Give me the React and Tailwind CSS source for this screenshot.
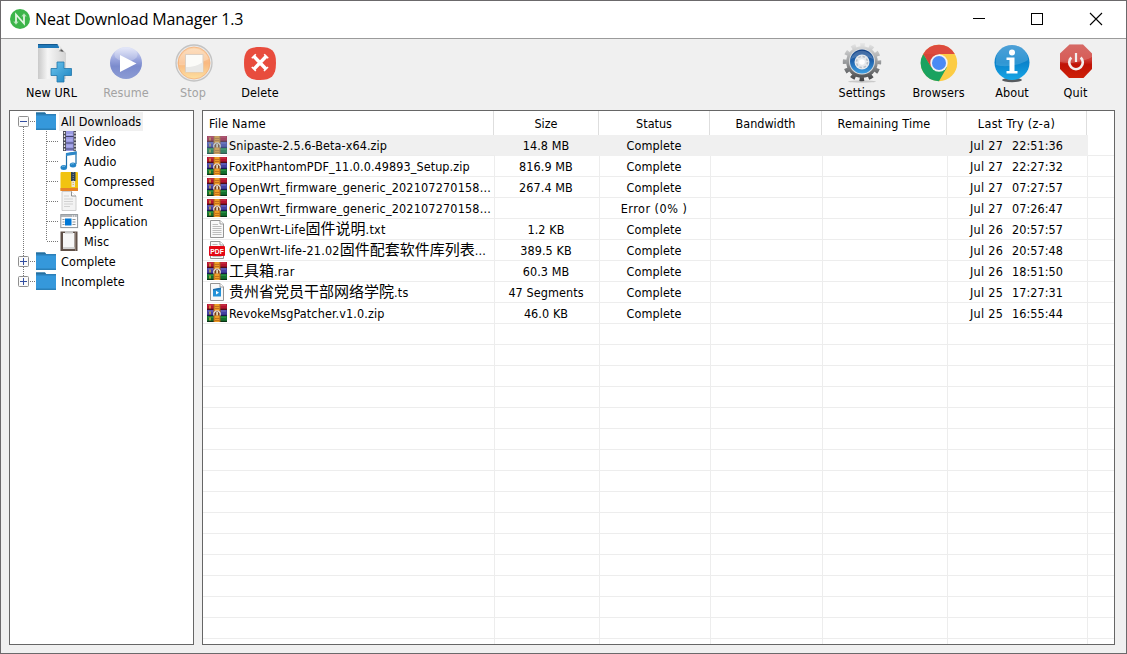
import React from 'react';

const UI_FONT = "font-['DejaVu_Sans_Condensed','DejaVu_Sans',Tahoma,'Noto_Sans_CJK_SC',sans-serif]";

/* ---------- toolbar icons (40x40) ---------- */

const NewUrlIcon = () => (
  <svg width="40" height="40" viewBox="0 0 40 40">
    <defs>
      <linearGradient id="nu1" x1="0" x2="1"><stop offset="0" stopColor="#c9c9c9" /><stop offset=".35" stopColor="#f6f6f6" /><stop offset="1" stopColor="#d4d4d4" /></linearGradient>
      <linearGradient id="nu2" x1="0" x2="1" y2="1"><stop offset="0" stopColor="#6cc4ee" /><stop offset="1" stopColor="#1a83c0" /></linearGradient>
      <linearGradient id="nu3" x1="0" x2="1" y2="1"><stop offset="0.3" stopColor="#fff" /><stop offset="0.55" stopColor="#333" /><stop offset="1" stopColor="#bbb" /></linearGradient>
    </defs>
    <path d="M6 1h20l8 9v26H6z" fill="url(#nu1)" />
    <path d="M6 1h19l3 4H6z" fill="#1f78b8" />
    <path d="M6 1h19l1 1H6z" fill="#14598f" />
    <path d="M26 2c2 2 1 5 .5 6.500c3-.5 6 0 7.500 3z" fill="url(#nu3)" />
    <path d="M25 19h7v6.500h7.500v7h-7.500v6.500h-7v-6.500h-6v-7h6z" fill="url(#nu2)" stroke="#2176ab" strokeWidth=".8" />
  </svg>
);

const ResumeIcon = () => (
  <svg width="40" height="40" viewBox="0 0 40 40">
    <defs>
      <linearGradient id="re1" x2="0" y2="1"><stop offset="0" stopColor="#dfe3f8" /><stop offset=".4" stopColor="#97a3dc" /><stop offset=".6" stopColor="#7b8bcd" /><stop offset="1" stopColor="#8c9cd4" /></linearGradient>
    </defs>
    <circle cx="20" cy="20" r="16" fill="url(#re1)" />
    <ellipse cx="20" cy="11.500" rx="11.500" ry="7" fill="#fff" opacity=".25" />
    <path d="M14 12l16.500 8.500L14 29z" fill="#fff" />
  </svg>
);

const StopIcon = () => (
  <svg width="40" height="40" viewBox="0 0 40 40">
    <defs>
      <linearGradient id="st1" x2="0" y2="1"><stop offset="0" stopColor="#fbd5ac" /><stop offset=".5" stopColor="#f9b880" /><stop offset="1" stopColor="#fde0a0" /></linearGradient>
    </defs>
    <circle cx="20" cy="20" r="18" fill="#e9e9e9" stroke="#c3c3c3" strokeWidth="1.300" />
    <circle cx="20" cy="20" r="16" fill="url(#st1)" stroke="#f4b07a" strokeWidth=".8" />
    <path d="M5 16a16 16 0 0 1 30 0c-8 4-20 7-30 6z" fill="#fff" opacity=".25" />
    <rect x="11.500" y="11.500" width="17.500" height="17.500" fill="#fbfbf8" stroke="#dccfc2" strokeWidth="1" />
    <path d="M12 24c7 0 13-2 17-5v10H12z" fill="#e8e8e6" />
  </svg>
);

const DeleteIcon = () => (
  <svg width="40" height="40" viewBox="0 0 40 40">
    <path d="M20 4c12 0 16 4 16 16c0 13-5 17-16 17S4 33 4 20C4 8 8 4 20 4z" fill="#e84c3d" />
    <path d="M13.500 13l12.500 13M26.500 13l-12.500 13" stroke="#fff" strokeWidth="3.400" />
    <path d="M11.800 15.300l4-4M24 28l4-4M24.200 11.300l4 4M11.800 24l4 4" stroke="#fff" strokeWidth="1.600" />
  </svg>
);

const SettingsIcon = () => (
  <svg width="40" height="40" viewBox="0 0 40 40">
    <defs>
      <linearGradient id="se1" gradientUnits="userSpaceOnUse" x1="20" x2="20" y1="0" y2="39"><stop offset="0" stopColor="#e9e9e9" /><stop offset=".5" stopColor="#97999b" /><stop offset="1" stopColor="#3c3d3f" /></linearGradient>
      <linearGradient id="se2" x2="0" y2="1"><stop offset="0" stopColor="#123f84" /><stop offset=".5" stopColor="#2064ae" /><stop offset="1" stopColor="#3d9fe3" /></linearGradient>
    </defs>
    <ellipse cx="20" cy="38.500" rx="14" ry="1.200" fill="#c9c9c9" />
    <circle cx="20" cy="19" r="15.800" fill="url(#se1)" />
    <circle cx="20" cy="19" r="17.200" fill="none" stroke="url(#se1)" strokeWidth="4" strokeDasharray="4.600 4.406" strokeDashoffset="2.300" />
    <circle cx="20" cy="18.500" r="13" fill="#d9dcdf" />
    <circle cx="20" cy="18.500" r="12" fill="url(#se2)" />
    <path d="M9 16a11.500 11.500 0 0 1 22 0c-6-3-16-3-22 0z" fill="#fff" opacity=".2" />
    <circle cx="20" cy="19" r="7.500" fill="#e6e9ed" />
    <circle cx="20" cy="19" r="5.500" fill="none" stroke="#b9bfc7" strokeWidth="1.500" strokeDasharray="2.500 1.800" />
    <circle cx="20" cy="19" r="2.800" fill="#fff" />
  </svg>
);

const ChromeIcon = () => (
  <svg width="40" height="40" viewBox="0 0 40 40">
    <circle cx="20" cy="20" r="18.200" fill="#fccc44" />
    <path d="M20 20L4.200 10.900A18.200 18.200 0 0 1 35.800 11H20z" fill="#dd4b3e" />
    <path d="M4.200 10.900A18.200 18.200 0 0 0 20 38.200L27.800 24.500 20 20l-7.800 4.500z" fill="#1aa260" />
    <path d="M4.200 10.900L12.200 24.500L20 11z" fill="#d74437" />
    <path d="M4.200 10.900L12.200 24.500l2 2L9 23z" fill="#1aa260" />
    <circle cx="20" cy="20" r="8.700" fill="#f3f3f3" />
    <circle cx="20" cy="20" r="7" fill="#4a8af4" />
  </svg>
);

const AboutIcon = () => (
  <svg width="40" height="40" viewBox="0 0 40 40">
    <defs>
      <linearGradient id="ab1" x2="0" y2="1"><stop offset="0" stopColor="#2d8fd0" /><stop offset=".5" stopColor="#0a83cb" /><stop offset="1" stopColor="#17a6e6" /></linearGradient>
    </defs>
    <ellipse cx="20" cy="37" rx="10" ry="2.200" fill="#3c4145" opacity=".85" />
    <circle cx="20" cy="19.500" r="17.500" fill="url(#ab1)" />
    <path d="M4 17a16 16 0 0 1 32 0c-8 5-22 8-32 5z" fill="#fff" opacity=".16" />
    <circle cx="20" cy="9.500" r="3" fill="#fff" />
    <path d="M14.500 14.500h8v13.500h3v2.500h-11v-2.500h3V17h-3z" fill="#fff" />
  </svg>
);

const QuitIcon = () => (
  <svg width="40" height="40" viewBox="0 0 40 40">
    <defs>
      <linearGradient id="qu1" x2="0" y2="1"><stop offset="0" stopColor="#ce4a45" /><stop offset=".45" stopColor="#cf3a34" /><stop offset=".6" stopColor="#c01306" /><stop offset="1" stopColor="#ce2008" /></linearGradient>
    </defs>
    <path d="M13.500 1.500h13.500l9 9v15.500l-8.500 9h-14.500L4 26V10.500z" fill="url(#qu1)" />
    <path d="M4 19V10.500l9.500-9h13.500l9 9V14c-8 4-20 8-32 5z" fill="#fff" opacity=".18" />
    <path d="M15.300 14.500a6.800 6.800 0 1 0 9.400 0" fill="none" stroke="#f3eeee" strokeWidth="2.600" />
    <path d="M20 10v9" stroke="#f3eeee" strokeWidth="2.200" />
  </svg>
);

/* ---------- small icons ---------- */

const FolderIcon = () => (
  <svg width="20" height="20" viewBox="0 0 20 20" className="shrink-0">
    <path d="M0 1.500h9l1 1.500h10V9H0z" fill="#2c7fb8" />
    <path d="M0 1.500h9l1 1.500H0z" fill="#26709f" />
    <rect y="4.500" width="20" height="14.500" fill="#3598db" />
    <rect y="17.500" width="20" height="1.500" fill="#2a80b9" />
  </svg>
);

const VideoIcon = () => (
  <svg width="20" height="20" viewBox="0 0 20 20">
    <rect x="3" width="13" height="20" fill="#4a4b55" />
    <rect x="6" width="7.500" height="20" fill="#9a9ae2" />
    <path d="M6 5.500h7.500M6 12h7.500M6 18h7.500" stroke="#41416c" />
    <path d="M6.500 3.500h6M6.500 9h6M6.500 15h6" stroke="#b9b9f0" />
    <path d="M4.500 1v19M15 1v19" stroke="#eee" strokeWidth="1.300" strokeDasharray="1.800 1.500" />
  </svg>
);

const AudioIcon = () => (
  <svg width="20" height="20" viewBox="0 0 20 20">
    <path d="M6.500 16V3L16 1v12" fill="none" stroke="#1d6da8" strokeWidth="1.200" />
    <path d="M6 2L16.500 .5v3L6 5z" fill="#2d88c8" />
    <ellipse cx="3.800" cy="16.500" rx="3.300" ry="2.500" fill="#2283c6" />
    <ellipse cx="13" cy="14" rx="3.300" ry="2.500" fill="#2283c6" />
    <path d="M2 16c1-1 2-1 3-.5M11 13.500c1-1 2-1 3-.5" stroke="#75bde8" fill="none" />
  </svg>
);

const CompressedIcon = () => (
  <svg width="20" height="20" viewBox="0 0 20 20">
    <rect x=".5" y="1" width="17.500" height="19" rx="1" fill="#f1c311" />
    <rect x=".5" y="17" width="17.500" height="3" fill="#e6822a" />
    <rect x="11" y="1" width="4.500" height="9" fill="#2d4154" />
    <path d="M13.200 1v9" stroke="#8796a3" strokeDasharray="1 1" />
    <rect x="11.500" y="10" width="3.500" height="6" fill="#e9e6da" />
    <path d="M13.200 11v4" stroke="#e0a92c" strokeDasharray="1 1" />
  </svg>
);

const DocumentIcon = () => (
  <svg width="20" height="20" viewBox="0 0 20 20">
    <path d="M2 .5h9.500l4.500 4.500v14.500H2z" fill="#f3f3f3" stroke="#c4c4c4" strokeWidth=".8" />
    <path d="M11.500.5v4.500h4.500" fill="#fff" stroke="#777" strokeWidth=".8" />
    <path d="M4 5h5M4 8h9M4 10.500h9M4 13h9M4 15.500h6" stroke="#cecece" strokeWidth=".9" />
  </svg>
);

const ApplicationIcon = () => (
  <svg width="20" height="20" viewBox="0 0 20 20">
    <rect x=".8" y="3.600" width="16.800" height="13" fill="#fcfcfc" stroke="#8e9499" />
    <path d="M1 5h16.500" stroke="#9ca1a5" strokeWidth="1.500" />
    <path d="M12 5h4.500" stroke="#fff" strokeDasharray="1 1" />
    <rect x="5" y="7.500" width="6.500" height="7" fill="#0078d7" />
    <path d="M2.500 8.500h2M2.500 11h2M2.500 13.500h2M12.500 8.500h3M12.500 11h3M12.500 13.500h3" stroke="#8f9598" />
  </svg>
);

const MiscIcon = () => (
  <svg width="20" height="20" viewBox="0 0 20 20">
    <rect x=".5" y=".5" width="17" height="19.500" fill="#5f5048" />
    <path d="M15.500 1v19" stroke="#8b7b70" />
    <rect x="3" y="2" width="11.500" height="16" fill="#f7f7f7" />
    <path d="M3 16h11.500v2H3z" fill="#d3d3d3" />
    <path d="M5 0h8v2.500H5z" fill="#c6c6c6" />
  </svg>
);

const RarIcon = ({ dim }) => (
  <svg width="20" height="18" viewBox="0 0 20 18" className="shrink-0">
    <rect width="20" height="6" fill="#b3142e" />
    <path d="M1 1h18" stroke="#d43c50" />
    <path d="M0 5.300h20" stroke="#4c0b18" strokeWidth="1.300" />
    <rect y="6" width="20" height="6" fill="#4440a0" />
    <path d="M1 7h18" stroke="#7772c6" />
    <path d="M0 11.400h20" stroke="#191950" strokeWidth="1.300" />
    <rect y="12" width="20" height="6" fill="#14702e" />
    <path d="M1 13.200h18" stroke="#2f9a4b" />
    <path d="M0 17.400h20" stroke="#0a3314" strokeWidth="1.200" />
    <path d="M3 1.500v3M3 7.500v3M3 13.500v3" stroke="#e3c63b" strokeWidth="1.200" />
    <rect x="6.500" width="7" height="18" fill="#a65b1d" />
    <rect x="7.500" width="5" height="18" fill="#ee9d26" />
    <path d="M7.500 2.500h5M8 4.500h4" stroke="#b8651a" strokeWidth=".8" />
    <path d="M6.800 11.500V9l1.700-2h3l1.700 2v2.500" fill="#7d3f17" stroke="#e0e0e6" strokeWidth="1.200" />
    <rect x="9.300" y="8" width="1.600" height="3.500" fill="#f4e9c4" />
    <path d="M8 14.500h4.500M8 16.500h4.500" stroke="#b76515" strokeWidth=".8" />
    {dim && <rect width="20" height="18" fill="#7fa8cc" opacity=".35" />}
  </svg>
);

const Page = () => (
  <g>
    <path d="M3.500.5h9.500l3.500 3.500v13.500h-13z" fill="#f8f8f8" stroke="#949494" />
    <path d="M13 .5v3.500h3.500" fill="#fff" stroke="#949494" strokeWidth=".9" />
  </g>
);

const TxtIcon = () => (
  <svg width="20" height="18" viewBox="0 0 20 18" className="shrink-0">
    <Page />
    <path d="M5.500 4.500h5.500M5.500 6.500h9M5.500 8.500h9M5.500 10.500h9M5.500 12.500h9M5.500 14.500h9" stroke="#b5b5b5" strokeWidth=".9" />
  </svg>
);

const PdfIcon = () => (
  <svg width="20" height="18" viewBox="0 0 20 18" className="shrink-0">
    <Page />
    <path d="M5.500 3.500h5M5.500 15.500h9" stroke="#bbb" />
    <rect x="2" y="5" width="16" height="10" rx="1" fill="#e30613" />
    <text x="10" y="12.500" textAnchor="middle" fill="#fff" fontSize="7" fontWeight="700" fontFamily="Liberation Sans, sans-serif" textLength="13.500" lengthAdjust="spacingAndGlyphs">PDF</text>
  </svg>
);

const TsIcon = () => (
  <svg width="20" height="18" viewBox="0 0 20 18" className="shrink-0">
    <Page />
    <path d="M6 6.500l8-1.500v8.500H6z" fill="#2492d8" />
    <path d="M6 6l8-1.500v2L6 7.500z" fill="#1b6fb0" />
    <path d="M9 7.800l3 1.900-3 1.900z" fill="#fff" />
  </svg>
);

const fileIcons = { rar: RarIcon, txt: TxtIcon, pdf: PdfIcon, ts: TsIcon };

/* ---------- data ---------- */

const leftTools = [
  { label: 'New URL', Icon: NewUrlIcon, width: 'w-[75px]', shift: 'pl-px' },
  { label: 'Resume', Icon: ResumeIcon, width: 'w-[74px]', disabled: true, shift: '' },
  { label: 'Stop', Icon: StopIcon, width: 'w-[60px]', disabled: true, shift: 'pl-px' },
  { label: 'Delete', Icon: DeleteIcon, width: 'w-[74px]', shift: '' },
];

const rightTools = [
  { label: 'Settings', Icon: SettingsIcon, width: 'w-[76px]', shift: 'pr-px' },
  { label: 'Browsers', Icon: ChromeIcon, width: 'w-[77px]', shift: '' },
  { label: 'About', Icon: AboutIcon, width: 'w-[70px]', shift: '' },
  { label: 'Quit', Icon: QuitIcon, width: 'w-[57px]', shift: '' },
];

const categories = [
  { label: 'Video', Icon: VideoIcon },
  { label: 'Audio', Icon: AudioIcon },
  { label: 'Compressed', Icon: CompressedIcon },
  { label: 'Document', Icon: DocumentIcon },
  { label: 'Application', Icon: ApplicationIcon },
  { label: 'Misc', Icon: MiscIcon },
];

const files = [
  { icon: 'rar', name: ['Snipaste-2.5.6-Beta-x64.zip'], track: 'tracking-[0.09px]', size: '14.8 MB', status: 'Complete', date: 'Jul 27  22:51:36', selected: true },
  { icon: 'rar', name: ['FoxitPhantomPDF_11.0.0.49893_Setup.zip'], track: 'tracking-[0.08px]', size: '816.9 MB', status: 'Complete', date: 'Jul 27  22:27:32' },
  { icon: 'rar', name: ['OpenWrt_firmware_generic_202107270158...'], track: 'tracking-[0.175px]', size: '267.4 MB', status: 'Complete', date: 'Jul 27  07:27:57' },
  { icon: 'rar', name: ['OpenWrt_firmware_generic_202107270158...'], track: 'tracking-[0.175px]', size: '', status: 'Error (0% )', date: 'Jul 27  07:26:47' },
  { icon: 'txt', name: ['OpenWrt-Life', '固件说明', '.txt'], track: 'tracking-[0.22px]', size: '1.2 KB', status: 'Complete', date: 'Jul 26  20:57:57' },
  { icon: 'pdf', name: ['OpenWrt-life-21.02', '固件配套软件库列表', '...'], track: 'tracking-[0.2px]', size: '389.5 KB', status: 'Complete', date: 'Jul 26  20:57:48' },
  { icon: 'rar', name: ['', '工具箱', '.rar'], track: 'tracking-[0.2px]', size: '60.3 MB', status: 'Complete', date: 'Jul 26  18:51:50' },
  { icon: 'ts', name: ['', '贵州省党员干部网络学院', '.ts'], track: 'tracking-[0.2px]', size: '47 Segments', status: 'Complete', date: 'Jul 25  17:27:31' },
  { icon: 'rar', name: ['RevokeMsgPatcher.v1.0.zip'], track: 'tracking-[0.12px]', size: '46.0 KB', status: 'Complete', date: 'Jul 25  16:55:44' },
];

const emptyRows = Array.from({ length: 16 }, (_, i) => i);

/* ---------- pieces ---------- */

const Tool = ({ label, Icon, width, disabled, shift }) => (
  <div className={`flex flex-col items-center ${width}`}>
    <div className={`h-10 ${shift}`}><Icon /></div>
    <span className={`mt-0.5 whitespace-nowrap leading-4 tracking-[0.1px] ${disabled ? 'text-[#a3a3a3]' : 'text-black'}`}>{label}</span>
  </div>
);

const Expander = ({ open }) => (
  <svg width="26" height="20" viewBox="0 0 26 20" className="shrink-0">
    <path d="M20 10.500h6" stroke="#777" strokeDasharray="1 1" />
    <rect x="8.500" y="5.500" width="10" height="10" rx="1" fill="#fafafa" stroke="#8f8f8f" />
    <path d={open ? 'M10 10.500h7' : 'M10 10.500h7M13.500 7v7'} stroke="#334ea0" />
  </svg>
);

const RootNode = ({ label, open, selected, first, last }) => (
  <div className="flex h-5 items-center">
    <div className="relative h-5 w-[26px] shrink-0">
      <svg width="26" height="20" viewBox="0 0 26 20" className="absolute inset-0">
        <path d={first ? 'M13.500 16v4' : last ? 'M13.500 0v6' : 'M13.500 0v20'} stroke="#777" strokeDasharray="1 1" />
      </svg>
      <div className="absolute inset-0"><Expander open={open} /></div>
    </div>
    <FolderIcon />
    <span className={`ml-[3px] h-[19px] px-0.5 leading-5 tracking-[0.08px] ${selected ? 'bg-[#f0f0f0]' : ''}`}>{label}</span>
  </div>
);

const ChildNode = ({ label, Icon, last }) => (
  <div className="flex h-5 items-center">
    <svg width="50" height="20" viewBox="0 0 50 20" className="shrink-0">
      <path d="M13.500 0v20" stroke="#777" strokeDasharray="1 1" />
      <path d={last ? 'M36.500 0v10' : 'M36.500 0v20'} stroke="#777" strokeDasharray="1 1" />
      <path d="M37 10.500h12" stroke="#777" strokeDasharray="1 1" />
    </svg>
    <Icon />
    <span className="ml-1 pt-0.5 leading-5 tracking-[0.08px]">{label}</span>
  </div>
);

const cell = 'flex items-center justify-center border-r whitespace-pre pt-0.5';

const FileRow = ({ file }) => {
  const f = file || {};
  const line = f.selected ? 'h-[21px] border-[#f0f0f0] bg-[#f0f0f0]' : 'h-5 border-[#ededed]';
  const FileIcon = file ? fileIcons[f.icon] : null;
  return (
    <div className="flex h-[21px] shrink-0 border-b border-[#ededed]">
      <div className={`flex h-5 w-[292px] shrink-0 items-center border-r pl-1 ${f.selected ? 'border-[#f0f0f0]' : 'border-[#ededed]'}`}>
        {file && (
          <>
            <FileIcon dim={f.selected} />
            <span className={`flex flex-1 items-center whitespace-nowrap pl-0.5 pt-0.5 ${f.track} ${f.selected ? 'h-5 bg-[#f0f0f0]' : 'h-5'}`}>
              <span>{f.name[0]}</span>
              {f.name[1] && <span className="-mt-1 font-['Noto_Sans_CJK_SC',sans-serif] text-[15px] font-normal leading-5 tracking-normal">{f.name[1]}</span>}
              {f.name[2] && <span>{f.name[2]}</span>}
            </span>
          </>
        )}
      </div>
      <div className={`${cell} w-[105px] pr-0.5 tracking-[0.08px] ${line}`}>{f.size}</div>
      <div className={`${cell} w-[111px] pr-0.5 ${f.size === '' ? 'tracking-[0.5px]' : 'tracking-[0.08px]'} ${line}`}>{f.status}</div>
      <div className={`${cell} w-[112px] ${line}`} />
      <div className={`${cell} w-[125px] ${line}`} />
      <div className={`${cell} w-[140px] pr-0.5 tracking-[0.08px] ${line}`}>
        {file && (
          <>
            <span className="tracking-[0.3px]">{f.date.slice(0, 8)}</span>
            <span className="pl-px">{f.date.slice(8)}</span>
          </>
        )}
      </div>
    </div>
  );
};

export default function App() {
  return (
    <div className={`flex h-[654px] w-[1127px] flex-col overflow-hidden border border-[#6b696b] bg-[#f0f0f0] text-[12.5px] text-black ${UI_FONT}`}>
      <header className="flex h-[38px] shrink-0 items-center border-b border-[#9b9b9b] bg-white pl-[9px]">
        <svg width="20" height="20" viewBox="0 0 20 20" className="-mt-0.5">
          <circle cx="10" cy="10" r="10" fill="#3cb54a" />
          <path d="M6 14.500V5.500l8 9V5.500" fill="none" stroke="#e2f5e2" strokeWidth="1.800" />
          <path d="M3.800 12.500L6 15l2.200-2.500M11.800 7.500L14 5l2.200 2.500" fill="none" stroke="#a9e0ae" strokeWidth="1.100" />
        </svg>
        <h1 className="-mt-px ml-[5px] font-['Open_Sans','Noto_Sans',sans-serif] text-[16px] font-normal leading-6 tracking-[-0.17px]">Neat Download Manager 1.3</h1>
        <div className="-mt-px ml-auto flex pr-[21px]">
          <svg width="134" height="14" viewBox="0 0 134 14" fill="none" stroke="#000">
            <path d="M2 6.500h12" />
            <rect x="60.500" y="1.500" width="11" height="11" />
            <path d="M119 1l12 12M131 1l-12 12" strokeWidth="1.100" />
          </svg>
        </div>
      </header>

      <nav className="flex h-[71px] shrink-0 justify-between pl-[13px] pr-[22px] pt-1">
        <div className="flex">{leftTools.map((t) => <Tool key={t.label} {...t} />)}</div>
        <div className="flex">{rightTools.map((t) => <Tool key={t.label} {...t} />)}</div>
      </nav>

      <main className="flex h-[535px] shrink-0 gap-2 pl-2">
        <aside className="w-[185px] shrink-0 border border-[#666]">
          <div className="h-full bg-white">
            <RootNode label="All Downloads" open selected first />
            {categories.map((c, i) => <ChildNode key={c.label} {...c} last={i === categories.length - 1} />)}
            <RootNode label="Complete" />
            <RootNode label="Incomplete" last />
          </div>
        </aside>

        <section className="flex w-[913px] shrink-0 flex-col overflow-hidden border border-[#666] bg-white">
          <div className="flex h-6 shrink-0">
            <div className="flex w-[291px] items-center border-r border-[#dedede] pl-1.5 pt-0.5 tracking-[0.15px]">File Name</div>
            <div className={`${cell} w-[105px] border-[#dedede]`}>Size</div>
            <div className={`${cell} w-[111px] border-[#dedede]`}>Status</div>
            <div className={`${cell} w-[112px] border-[#dedede]`}>Bandwidth</div>
            <div className={`${cell} w-[125px] border-[#dedede] tracking-[0.15px]`}>Remaining Time</div>
            <div className={`${cell} w-[140px] border-[#dedede] tracking-[0.35px]`}>Last Try (z-a)</div>
          </div>
          {files.map((f, i) => <FileRow key={i} file={f} />)}
          {emptyRows.map((i) => <FileRow key={`e${i}`} />)}
        </section>
      </main>
    </div>
  );
}
